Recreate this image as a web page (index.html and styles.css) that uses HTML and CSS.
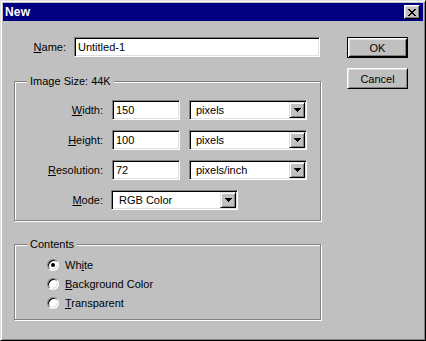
FILE: index.html
```html
<!DOCTYPE html>
<html>
<head>
<meta charset="utf-8">
<title>New</title>
<link rel="stylesheet" href="styles.css">
</head>
<body>
<div class="window">
  <div class="titlebar">
    <span class="title">New</span>
    <div class="close-btn">
      <svg class="close-x" width="8" height="7" viewBox="0 0 8 7" shape-rendering="crispEdges">
        <rect x="0" y="0" width="2" height="1"/><rect x="6" y="0" width="2" height="1"/>
        <rect x="1" y="1" width="2" height="1"/><rect x="5" y="1" width="2" height="1"/>
        <rect x="2" y="2" width="4" height="1"/>
        <rect x="3" y="3" width="2" height="1"/>
        <rect x="2" y="4" width="4" height="1"/>
        <rect x="1" y="5" width="2" height="1"/><rect x="5" y="5" width="2" height="1"/>
        <rect x="0" y="6" width="2" height="1"/><rect x="6" y="6" width="2" height="1"/>
      </svg>
    </div>
  </div>
  <div class="body">
    <div class="main">
      <div class="name-row">
        <span class="name-label"><u>N</u>ame:</span>
        <div class="field name-field">Untitled-1</div>
      </div>

      <div class="group group-size">
        <span class="legend">Image Size: 44K</span>
        <div class="grid">
          <span class="lbl"><u>W</u>idth:</span>
          <div class="field num">150</div>
          <div class="select unit"><span class="val">pixels</span><span class="drop"><svg width="7" height="4" viewBox="0 0 7 4" shape-rendering="crispEdges"><path d="M0 0h7v1h-1v1h-1v1h-1v1h-1v-1h-1v-1h-1v-1h-1z"/></svg></span></div>

          <span class="lbl"><u>H</u>eight:</span>
          <div class="field num">100</div>
          <div class="select unit"><span class="val">pixels</span><span class="drop"><svg width="7" height="4" viewBox="0 0 7 4" shape-rendering="crispEdges"><path d="M0 0h7v1h-1v1h-1v1h-1v1h-1v-1h-1v-1h-1v-1h-1z"/></svg></span></div>

          <span class="lbl"><u>R</u>esolution:</span>
          <div class="field num">72</div>
          <div class="select unit"><span class="val">pixels/inch</span><span class="drop"><svg width="7" height="4" viewBox="0 0 7 4" shape-rendering="crispEdges"><path d="M0 0h7v1h-1v1h-1v1h-1v1h-1v-1h-1v-1h-1v-1h-1z"/></svg></span></div>

          <span class="lbl"><u>M</u>ode:</span>
          <div class="select mode"><span class="val mode-val">RGB Color</span><span class="drop"><svg width="7" height="4" viewBox="0 0 7 4" shape-rendering="crispEdges"><path d="M0 0h7v1h-1v1h-1v1h-1v1h-1v-1h-1v-1h-1v-1h-1z"/></svg></span></div>
        </div>
      </div>

      <div class="group group-contents">
        <span class="legend">Contents</span>
        <div class="radio-row"><span class="radio checked"></span><span>Wh<u>i</u>te</span></div>
        <div class="radio-row"><span class="radio"></span><span><u>B</u>ackground Color</span></div>
        <div class="radio-row"><span class="radio"></span><span><u>T</u>ransparent</span></div>
      </div>
    </div>

    <div class="buttons">
      <div class="btn default">OK</div>
      <div class="btn">Cancel</div>
    </div>
  </div>
</div>
</body>
</html>
```

FILE: styles.css
```css
* { box-sizing: border-box; }

html, body {
  margin: 0;
  padding: 0;
  background: #c0c0c0;
}

body {
  font-family: "Liberation Sans", Arial, sans-serif;
  font-size: 11px;
  color: #000;
}

u { text-decoration: underline; text-underline-offset: 1px; }

.window {
  width: 426px;
  height: 341px;
  background: #c0c0c0;
  border: 1px solid;
  border-color: #dfdfdf #000 #000 #dfdfdf;
  box-shadow: inset 1px 1px 0 #fff, inset -1px -1px 0 #808080;
  padding: 2px;
  display: flex;
  flex-direction: column;
}

.titlebar {
  height: 18px;
  background: #000080;
  color: #fff;
  display: flex;
  align-items: center;
  justify-content: space-between;
  padding: 0 3px 0 2px;
}

.title {
  font-weight: bold;
  font-size: 12px;
  letter-spacing: 0.2px;
}

.close-btn {
  width: 16px;
  height: 14px;
  background: #c0c0c0;
  border: 1px solid;
  border-color: #fff #000 #000 #fff;
  box-shadow: inset -1px -1px 0 #808080, inset 1px 1px 0 #dfdfdf;
  display: flex;
  align-items: center;
  justify-content: center;
}

.close-x { fill: #000; display: block; }

.body {
  flex: 1;
  display: flex;
  align-items: flex-start;
  padding: 16px 0 0 11px;
}

.main {
  width: 307px;
}

.name-row {
  display: flex;
  align-items: center;
  height: 20px;
}

.name-label {
  width: 52px;
  text-align: right;
  margin-right: 8px;
}

.field {
  background: #fff;
  border: 1px solid;
  border-color: #808080 #fff #fff #808080;
  box-shadow: inset 1px 1px 0 #000, inset -1px -1px 0 #dfdfdf;
  padding: 2px 3px;
  height: 20px;
  line-height: 14px;
  white-space: nowrap;
}

.name-field { width: 246px; }

.group {
  position: relative;
  border: 1px solid #808080;
  box-shadow: 1px 1px 0 #fff, inset 1px 1px 0 #fff;
}

.legend {
  position: absolute;
  top: -7px;
  left: 12px;
  padding: 0 3px;
  background: #c0c0c0;
  line-height: 13px;
  white-space: nowrap;
}

.group-size {
  margin-top: 24px;
  height: 140px;
  padding-top: 18px;
}

.grid {
  display: grid;
  grid-template-columns: 88px 68px 118px;
  grid-auto-rows: 20px;
  column-gap: 9px;
  row-gap: 10px;
}

.lbl {
  text-align: right;
  align-self: center;
  white-space: nowrap;
}

.select {
  display: flex;
  background: #fff;
  border: 1px solid;
  border-color: #808080 #fff #fff #808080;
  box-shadow: inset 1px 1px 0 #000, inset -1px -1px 0 #dfdfdf;
  padding: 1px;
  height: 20px;
}

.val {
  flex: 1;
  padding-left: 5px;
  line-height: 16px;
  white-space: nowrap;
}

.mode-val { padding-left: 6px; }

.drop {
  width: 16px;
  height: 16px;
  background: #c0c0c0;
  border: 1px solid;
  border-color: #dfdfdf #000 #000 #dfdfdf;
  box-shadow: inset 1px 1px 0 #fff, inset -1px -1px 0 #808080;
  display: flex;
  align-items: center;
  justify-content: center;
}

.drop svg { fill: #000; display: block; }

.mode {
  grid-column: 2 / span 2;
  width: 127px;
  margin-left: -1px;
}

.group-contents {
  margin-top: 23px;
  height: 76px;
  padding: 10px 0 0 32px;
}

.radio-row {
  display: flex;
  align-items: center;
  height: 19px;
  white-space: nowrap;
}

.radio {
  position: relative;
  width: 12px;
  height: 12px;
  border-radius: 50%;
  background: #fff;
  border: 1px solid;
  border-color: #808080 #fff #fff #808080;
  box-shadow: inset 1px 1px 0 #000, inset -1px -1px 0 #dfdfdf;
  margin-right: 6px;
  flex: none;
}

.radio.checked::after {
  content: "";
  position: absolute;
  left: 3px;
  top: 3px;
  width: 4px;
  height: 4px;
  border-radius: 50%;
  background: #000;
}

.buttons {
  margin-left: 26px;
  display: flex;
  flex-direction: column;
  gap: 10px;
}

.btn {
  width: 61px;
  height: 21px;
  background: #c0c0c0;
  border: 1px solid;
  border-color: #fff #000 #000 #fff;
  box-shadow: inset 1px 1px 0 #dfdfdf, inset -1px -1px 0 #808080;
  display: flex;
  align-items: center;
  justify-content: center;
}

.btn.default {
  border-color: #000;
  box-shadow: inset 1px 1px 0 #fff, inset -1px -1px 0 #000, inset 2px 2px 0 #dfdfdf, inset -2px -2px 0 #808080;
}
```
